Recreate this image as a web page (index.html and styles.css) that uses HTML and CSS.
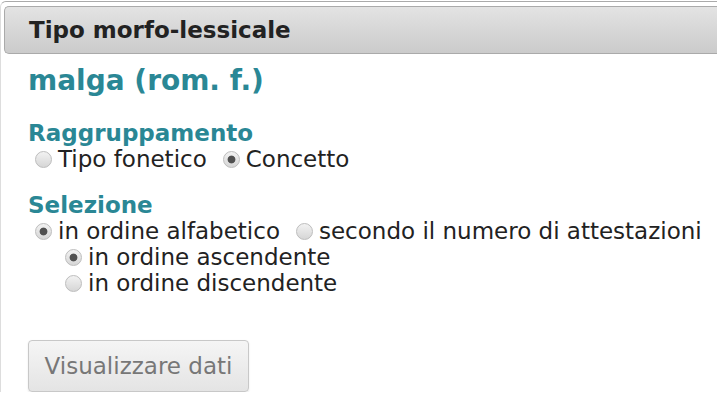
FILE: index.html
```html
<!DOCTYPE html>
<html>
<head>
<meta charset="utf-8">
<link rel="stylesheet" href="styles.css">
</head>
<body>
<div class="panel">
  <div class="header">Tipo morfo-lessicale</div>
  <div class="content">
    <h1 class="title">malga (rom. f.)</h1>
    <h2 class="label">Raggruppamento</h2>
    <div class="row">
      <label class="opt"><input type="radio" name="g"> Tipo fonetico</label>
      <label class="opt"><input type="radio" name="g" checked> Concetto</label>
    </div>
    <h2 class="label sel">Selezione</h2>
    <div class="row">
      <label class="opt"><input type="radio" name="s" checked> in ordine alfabetico</label>
      <label class="opt"><input type="radio" name="s"> secondo il numero di attestazioni</label>
    </div>
    <div class="sub">
      <label class="opt"><input type="radio" name="o" checked> in ordine ascendente</label>
      <label class="opt"><input type="radio" name="o"> in ordine discendente</label>
    </div>
    <button class="btn" disabled>Visualizzare dati</button>
  </div>
</div>
</body>
</html>
```

FILE: styles.css
```css
html, body {
  margin: 0;
  padding: 0;
  background: #fff;
}
body {
  font-family: "DejaVu Sans", Verdana, sans-serif;
  color: #222;
  overflow: hidden;
}
.panel {
  margin: 1px -10px 0 0;
  border-top: 1px solid #aaa;
  border-left: 1px solid #ddd;
  border-radius: 6px 0 0 0;
  padding: 4px 0 0 3px;
}
.header {
  height: 46px;
  border: 1px solid #aaa;
  border-right: none;
  border-radius: 5px 0 0 5px;
  background: linear-gradient(#e3e3e3, #cbcbcb);
  font-weight: bold;
  font-size: 23px;
  line-height: 46px;
  padding-left: 24px;
  color: #222;
}
.content {
  padding: 0 0 0 24px;
}
.title {
  margin: 10px 0 0 0;
  font-size: 28px;
  line-height: 34px;
  color: #2a8795;
  font-weight: bold;
}
.label {
  margin: 22px 0 0 0;
  font-size: 23px;
  line-height: 26px;
  color: #2a8795;
  font-weight: bold;
}
.label.sel {
  margin-top: 20px;
}
.row {
  display: flex;
  gap: 16px;
  padding-left: 7px;
}
.sub {
  display: flex;
  flex-direction: column;
  padding-left: 37px;
}
.opt {
  display: flex;
  align-items: center;
  font-size: 23px;
  line-height: 26px;
  color: #222;
  gap: 6px;
}
.opt input {
  appearance: none;
  -webkit-appearance: none;
  margin: 0;
  width: 17px;
  height: 17px;
  border-radius: 50%;
  border: 1px solid #bdbdbd;
  background: linear-gradient(#f2f2f2, #d6d6d6);
}
.opt input:checked {
  background: radial-gradient(circle, #505050 0, #505050 3.5px, transparent 4.3px), linear-gradient(#f2f2f2, #d6d6d6);
}
.btn {
  display: block;
  margin-top: 44px;
  font-family: inherit;
  font-size: 23px;
  color: #777;
  width: 221px;
  height: 52px;
  border: 1px solid #c8c8c8;
  border-radius: 4px;
  background: linear-gradient(#f5f5f5, #e4e4e4);
  box-shadow: 0 1px 2px rgba(0,0,0,0.1);
  padding: 0;
}
```
